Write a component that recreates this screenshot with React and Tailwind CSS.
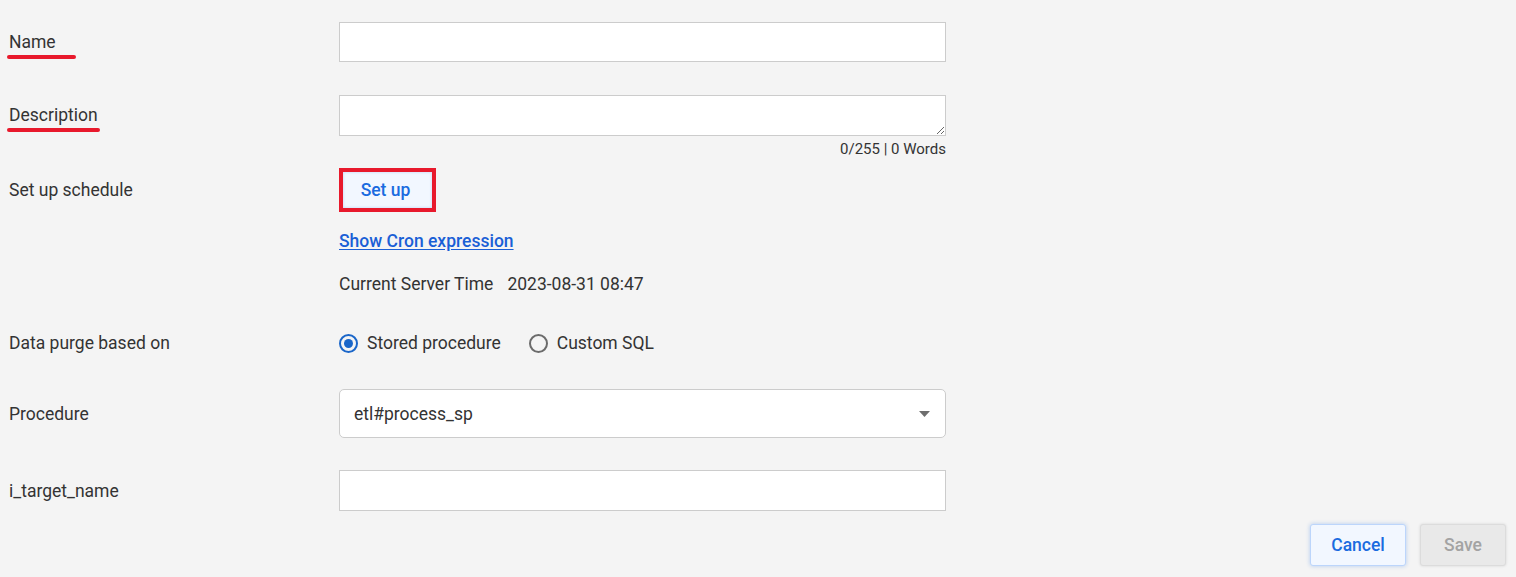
import { useState } from "react";

const font = { fontFamily: "Roboto, 'Liberation Sans', sans-serif" };

function Label({ children, mark, markWidth }) {
    return (
        <div className="w-[339px] shrink-0 pl-[9px] text-[17.5px] text-[#333]">
            <span className="relative inline-block leading-6">
                {children}
                {/* hand-drawn underline marker */}
                {mark && (
                    <span
                        className={`absolute left-[-2px] top-[25px] h-[4px] rounded-full bg-[#e8192c] ${markWidth}`}
                    />
                )}
            </span>
        </div>
    );
}

function Radio({ checked, label, onClick }) {
    return (
        <button onClick={onClick} className="flex items-center gap-[9px] text-[17.5px] text-[#333]">
            <span
                className={`flex h-[19px] w-[19px] items-center justify-center rounded-full border-2 ${
                    checked ? "border-[#1a66c9]" : "border-[#6b6b6b]"
                }`}
            >
                {checked && <span className="h-[9px] w-[9px] rounded-full bg-[#1a66c9]" />}
            </span>
            {label}
        </button>
    );
}

export default function App() {
    const [mode, setMode] = useState("sp");

    return (
        <div className="min-h-[577px] w-full bg-[#f4f4f4] pt-[22px]" style={font}>
            {/* Name */}
            <div className="flex items-center">
                <Label mark markWidth="w-[69px]">Name</Label>
                <input className="h-[40px] w-[607px] border border-[#cccccc] bg-white px-3 outline-none" />
            </div>

            {/* Description */}
            <div className="mt-[33px] flex items-center">
                <Label mark markWidth="w-[93px]">Description</Label>
                <textarea className="h-[41px] w-[607px] border border-[#cccccc] bg-white px-3 py-2 outline-none" />
            </div>
            <div className="mt-[3px] flex">
                <div className="w-[339px] shrink-0" />
                <div className="w-[607px] text-right text-[15px] leading-5 text-[#333]">0/255 | 0 Words</div>
            </div>

            {/* Schedule */}
            <div className="mt-[9px] flex items-center">
                <Label>Set up schedule</Label>
                <div className="border-4 border-[#e8192c]">
                    <button className="h-[36px] w-[89px] bg-[#f2f7ff] pr-[4px] text-[17.5px] font-medium text-[#1a6be0] shadow-[inset_0_0_3px_rgba(26,107,224,0.25)]">
                        Set up
                    </button>
                </div>
            </div>
            <div className="mt-[17px] flex">
                <div className="w-[339px] shrink-0" />
                <a href="#" className="text-[17.5px] font-medium leading-6 text-[#1a5fd6] underline underline-offset-2">
                    Show Cron expression
                </a>
            </div>
            <div className="mt-[19px] flex">
                <div className="w-[339px] shrink-0" />
                <div className="flex gap-[14px] text-[17.5px] leading-6 text-[#333]">
                    <span>Current Server Time</span>
                    <span>2023-08-31 08:47</span>
                </div>
            </div>

            {/* Purge mode */}
            <div className="mt-[34px] flex items-center">
                <Label>Data purge based on</Label>
                <div className="flex items-center gap-[28px]">
                    <Radio checked={mode === "sp"} label="Stored procedure" onClick={() => setMode("sp")} />
                    <Radio checked={mode === "sql"} label="Custom SQL" onClick={() => setMode("sql")} />
                </div>
            </div>

            {/* Procedure */}
            <div className="mt-[33px] flex items-center">
                <Label>Procedure</Label>
                <div className="flex h-[49px] w-[607px] items-center justify-between rounded-[5px] border border-[#cccccc] bg-white pl-[14px] pr-[15px] text-[17.5px] text-[#333]">
                    <span>etl#process_sp</span>
                    <svg width="11" height="6" viewBox="0 0 11 6">
                        <path d="M0 0h11L5.5 6z" fill="#6e6e6e" />
                    </svg>
                </div>
            </div>

            {/* Target name */}
            <div className="mt-[32px] flex items-center">
                <Label>i_target_name</Label>
                <input className="h-[41px] w-[607px] border border-[#cccccc] bg-white px-3 outline-none" />
            </div>

            {/* Footer actions */}
            <div className="mt-[13px] flex justify-end gap-[14px] pr-[10px]">
                <button className="h-[42px] w-[96px] rounded-[3px] border border-[#bcd5fb] bg-[#f2f7ff] text-[17.5px] font-medium text-[#1a6be0] shadow-[0_0_4px_rgba(26,107,224,0.3)]">
                    Cancel
                </button>
                <button
                    disabled
                    className="h-[42px] w-[86px] rounded-[3px] border border-[#dcdcdc] bg-[#e9e9e9] text-[17.5px] font-medium text-[#a3a3a3] shadow-[0_0_3px_rgba(0,0,0,0.12)]"
                >
                    Save
                </button>
            </div>
        </div>
    );
}
